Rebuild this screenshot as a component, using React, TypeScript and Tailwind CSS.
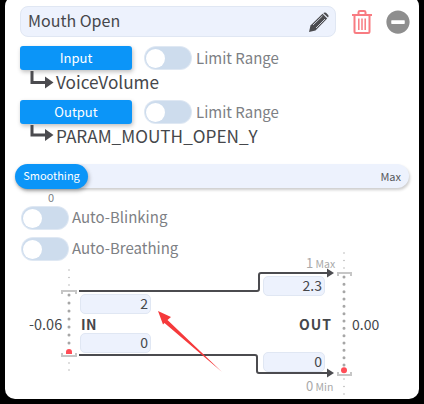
import React from "react";
import { FaMinusCircle } from "react-icons/fa";

function Toggle() {
  return (
    <div className="flex h-[22px] w-[46px] shrink-0 items-center rounded-full bg-[#cddced] pl-[1px] shadow-[0_0_0_1px_#dfe8f3]">
      <div className="h-[19px] w-[19px] rounded-full bg-white" />
    </div>
  );
}

function ElbowArrow({ y }: { y: number }) {
  return (
    <svg width="25" height="20" viewBox="0 0 25 20" className="shrink-0">
      <path d={`M3 0V${y}H17`} fill="none" stroke="#4b4b4f" strokeWidth="3" />
      <path d={`M16 ${y - 6}L24.500 ${y}L16 ${y + 6}Z`} fill="#4b4b4f" />
    </svg>
  );
}

function BindRow({ label, value, y, gapClass }: { label: string; value: string; y: number; gapClass: string }) {
  return (
    <div className={gapClass}>
      <div className="flex items-center">
        <div className="flex h-[24px] w-[112px] items-center justify-center rounded-[3px] bg-[#0b95f8] text-[13px] text-white shadow-[1px_2px_4px_rgba(0,0,0,0.25)]">
          {label}
        </div>
        <div className="ml-[13px]">
          <Toggle />
        </div>
        <span className="ml-[5px] text-[15px] leading-[24px] text-[#7d8084]">Limit Range</span>
      </div>
      <div className="mt-[1px] flex h-[28px] items-start pl-[9px]">
        <ElbowArrow y={y} />
        <span className="ml-[2px] text-[17.200px] leading-[22px] text-[#45474b]">{value}</span>
      </div>
    </div>
  );
}

function ValueBox({ value, className }: { value: string; className: string }) {
  return (
    <div
      className={`absolute flex h-[20px] items-center justify-end rounded-[5px] border border-[#e0e7f3] bg-[#edf2fd] pb-[2px] pr-[2px] text-[14px] text-[#45474b] ${className}`}
    >
      {value}
    </div>
  );
}

function Graph() {
  return (
    <div className="relative mt-[3px] h-[137px]">
      <svg width="414" height="137" viewBox="0 0 414 137" className="absolute left-0 top-0 overflow-visible">
        <path d="M57 31V28H71V31" fill="none" stroke="#c6c6c6" strokeWidth="2" />
        <path d="M57 90V93H71V90" fill="none" stroke="#c6c6c6" strokeWidth="2" />
        <path d="M333 13V10H346V13" fill="none" stroke="#c6c6c6" strokeWidth="2" />
        <path d="M333 109V112H346V109" fill="none" stroke="#c6c6c6" strokeWidth="2" />
        <line x1="64" y1="7" x2="64" y2="24" stroke="#b4b4b4" strokeWidth="1.600" strokeDasharray="0 7.500" strokeLinecap="round" />
        <line x1="64" y1="100" x2="64" y2="112" stroke="#b4b4b4" strokeWidth="1.600" strokeDasharray="0 7" strokeLinecap="round" />
        <line x1="64" y1="32" x2="64" y2="81" stroke="#a6a6a6" strokeWidth="3" strokeDasharray="0 8" strokeLinecap="round" />
        <line x1="339" y1="-10" x2="339" y2="6" stroke="#b4b4b4" strokeWidth="1.600" strokeDasharray="0 7.500" strokeLinecap="round" />
        <line x1="339" y1="116" x2="339" y2="132" stroke="#b4b4b4" strokeWidth="1.600" strokeDasharray="0 7.500" strokeLinecap="round" />
        <line x1="339" y1="14" x2="339" y2="102" stroke="#a6a6a6" strokeWidth="3" strokeDasharray="0 7.330" strokeLinecap="round" />
        <path d="M74 28H252Q254 28 254 26V12Q254 10 256 10H323" fill="none" stroke="#4b4b4f" strokeWidth="2" />
        <path d="M74 92H250Q252 92 252 94V108Q252 110 254 110H323" fill="none" stroke="#4b4b4f" strokeWidth="2" />
        <path d="M322 5.500L329 10L322 14.500Z" fill="#4b4b4f" />
        <path d="M322 105.500L329 110L322 114.500Z" fill="#4b4b4f" />
        <path d="M61 91V89A3 3 0 0 1 67 89V91Z" fill="#ff4d57" />
        <circle cx="339" cy="107.300" r="3" fill="#ff4d57" />
      </svg>
      <ValueBox value="2" className="left-[75px] top-[31px] w-[71px]" />
      <ValueBox value="0" className="left-[75px] top-[70px] w-[71px]" />
      <ValueBox value="2.3" className="left-[258px] top-[13px] w-[62px]" />
      <ValueBox value="0" className="left-[258px] top-[89px] w-[62px]" />
      <span className="absolute left-[24px] top-[51px] text-[14.500px] leading-[20px] text-[#45474b]">-0.06</span>
      <span className="absolute left-[76px] top-[51px] text-[14px] font-bold leading-[20px] tracking-[0.5px] text-[#45474b]">IN</span>
      <span className="absolute left-[294px] top-[51px] text-[14px] font-bold leading-[20px] tracking-[1px] text-[#45474b]">OUT</span>
      <span className="absolute left-[347px] top-[51px] text-[14px] leading-[20px] text-[#45474b]">0.00</span>
      <span className="absolute left-[301px] top-[-8px] text-[10.500px] leading-[16px] text-[#a9a9a9]">
        <span className="text-[13px]">1</span> Max
      </span>
      <span className="absolute left-[301px] top-[115px] text-[10.500px] leading-[16px] text-[#a9a9a9]">
        <span className="text-[13px]">0</span> Min
      </span>
    </div>
  );
}

export default function App() {
  return (
    <div
      className="relative h-[404px] w-[424px] overflow-hidden bg-black"
      style={{ fontFamily: '"Noto Sans CJK SC", "Noto Sans", sans-serif' }}
    >
      <div className="mx-[5px] mt-[-4px] h-[403px] w-[414px] rounded-[10px] bg-white pt-[10px]">
        <div className="flex items-center pl-[15px]">
          <div className="flex h-[31px] w-[316px] items-center justify-between rounded-[8px] border border-[#e0e7f3] bg-[#edf2fd] pl-[7px] pr-[6px]">
            <span className="pb-[3px] text-[16px] text-[#45474b]">Mouth Open</span>
            <svg width="20" height="20" viewBox="0 0 20 20">
              <path d="M0 20L1.500 13.500L13.500 1.800L18.200 6.500L6.500 18.500Z" fill="#4b4b4f" />
              <path d="M14.800 0.800Q16 0 17 0.800L19.200 3Q20 4 19.200 5.200L19 5.400L14.400 1.200Z" fill="#4b4b4f" />
              <path d="M4 13L13.500 3.800M7 16L16 7" stroke="#edf2fd" strokeWidth="0.800" fill="none" />
            </svg>
          </div>
          <svg width="20" height="24" viewBox="0 0 20 24" className="ml-[16px]">
            <path d="M0 5H20M6.500 4.500V2.300Q6.500 1 8 1H12Q13.500 1 13.500 2.300V4.500" fill="none" stroke="#f87c82" strokeWidth="2" />
            <path d="M2.500 5.500V21.500Q2.500 23 4 23H16Q17.500 23 17.500 21.500V5.500" fill="none" stroke="#f87c82" strokeWidth="2" />
            <path d="M6.800 8.500V20M10 8.500V20M13.200 8.500V20" fill="none" stroke="#f87c82" strokeWidth="1.500" />
          </svg>
          <FaMinusCircle size={24} color="#8e8e8e" className="ml-[14px]" />
        </div>
        <div className="pl-[15px]">
          <BindRow label="Input" value="VoiceVolume" y={11.5} gapClass="mt-[9px]" />
          <BindRow label="Output" value="PARAM_MOUTH_OPEN_Y" y={10} gapClass="mt-[1px]" />
        </div>
        <div className="relative ml-[10px] mt-[11px] flex h-[24px] w-[394px] items-center justify-between rounded-full bg-[#edf2fd] shadow-[1px_2px_3px_rgba(0,0,0,0.2)]">
          <div className="flex h-[25px] w-[73px] items-center justify-center rounded-full bg-[#0b95f8] pb-[1px] text-[11px] text-white shadow-[1px_2px_4px_rgba(0,0,0,0.3)]">
            Smoothing
          </div>
          <span className="pr-[8px] text-[11px] text-[#55575b]">Max</span>
        </div>
        <div className="ml-[43px] h-[16px] text-[11px] leading-[18px] text-[#7d8084]">0</div>
        <div className="ml-[17px] mt-[3px] flex h-[22px] items-center">
          <Toggle />
          <span className="ml-[4px] pb-[2px] text-[15px] text-[#7d8084]">Auto-Blinking</span>
        </div>
        <div className="ml-[17px] mt-[9px] flex h-[22px] items-center">
          <Toggle />
          <span className="ml-[4px] pb-[2px] text-[15px] text-[#7d8084]">Auto-Breathing</span>
        </div>
        <Graph />
      </div>
      <svg width="424" height="404" viewBox="0 0 424 404" className="pointer-events-none absolute left-0 top-0">
        <path d="M158 311L171 317L167.500 320L222 372L164.500 323L163 324.500Z" fill="#f5393b" />
      </svg>
    </div>
  );
}
